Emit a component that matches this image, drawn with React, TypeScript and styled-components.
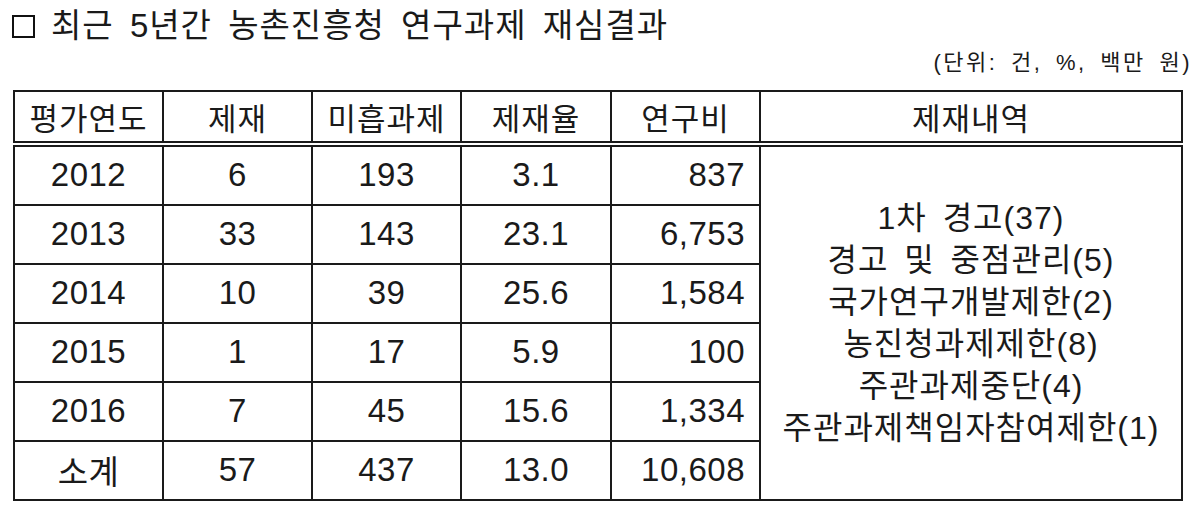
import styled, { createGlobalStyle } from 'styled-components';

const GlobalStyle = createGlobalStyle`
  body {
    margin: 0;
    background: #fff;
    color: #1a1a1a;
    font-family: 'Liberation Sans', 'Noto Sans CJK KR', sans-serif;
  }
`;

const Page = styled.div`
  width: 1200px;
  height: 514px;
  padding: 6px 12px 0 12px;
  box-sizing: border-box;
`;

const Title = styled.h1`
  margin: 0;
  height: 40px;
  display: flex;
  align-items: center;
  gap: 16px;
  font-size: 33px;
  font-weight: 400;
  line-height: 40px;
  letter-spacing: 1px;
  word-spacing: 6px;
`;

const Square = styled.span`
  width: 19px;
  height: 19px;
  border: 2px solid #111;
  flex-shrink: 0;
  margin-top: 1px;
`;

const Unit = styled.div`
  height: 44px;
  text-align: right;
  font-size: 22px;
  line-height: 34px;
  margin-right: -4px;
  letter-spacing: 2.5px;
  word-spacing: 5px;
`;

const Table = styled.table`
  margin-left: 1px;
  width: 1170px;
  border-collapse: collapse;
  table-layout: fixed;
  border: 2px solid #1a1a1a;
  font-size: 33px;
`;

const HeadCell = styled.th`
  height: 49px;
  padding: 0;
  border: 2px solid #1a1a1a;
  border-bottom: 6px double #1a1a1a;
  font-weight: 400;
  font-size: 31px;
  letter-spacing: 1px;
  text-align: center;
`;

const Cell = styled.td<{ $align?: 'center' | 'right' }>`
  height: 55px;
  padding: 0 14px 2px 14px;
  border: 2px solid #1a1a1a;
  text-align: ${({ $align }) => $align || 'center'};
  letter-spacing: 0.5px;
`;

const NoteCell = styled.td`
  padding: 0 4px;
  border: 2px solid #1a1a1a;
  text-align: center;
  vertical-align: middle;
  font-size: 32px;
  line-height: 42px;
  letter-spacing: 1px;
  word-spacing: 6px;
`;

const rows = [
  { year: '2012', count: '6', unfinished: '193', rate: '3.1', cost: '837' },
  { year: '2013', count: '33', unfinished: '143', rate: '23.1', cost: '6,753' },
  { year: '2014', count: '10', unfinished: '39', rate: '25.6', cost: '1,584' },
  { year: '2015', count: '1', unfinished: '17', rate: '5.9', cost: '100' },
  { year: '2016', count: '7', unfinished: '45', rate: '15.6', cost: '1,334' },
  { year: '소계', count: '57', unfinished: '437', rate: '13.0', cost: '10,608' },
];

const notes = [
  '1차 경고(37)',
  '경고 및 중점관리(5)',
  '국가연구개발제한(2)',
  '농진청과제제한(8)',
  '주관과제중단(4)',
  '주관과제책임자참여제한(1)',
];

const App = () => {
  return (
    <Page>
      <GlobalStyle />
      <Title>
        <Square />
        최근 5년간 농촌진흥청 연구과제 재심결과
      </Title>
      <Unit>(단위: 건, %, 백만 원)</Unit>
      <Table>
        <colgroup>
          <col style={{ width: 149 }} />
          <col style={{ width: 149 }} />
          <col style={{ width: 149 }} />
          <col style={{ width: 150 }} />
          <col style={{ width: 149 }} />
          <col />
        </colgroup>
        <thead>
          <tr>
            <HeadCell>평가연도</HeadCell>
            <HeadCell>제재</HeadCell>
            <HeadCell>미흡과제</HeadCell>
            <HeadCell>제재율</HeadCell>
            <HeadCell>연구비</HeadCell>
            <HeadCell>제재내역</HeadCell>
          </tr>
        </thead>
        <tbody>
          {rows.map((row, i) => (
            <tr key={row.year}>
              <Cell>{row.year}</Cell>
              <Cell>{row.count}</Cell>
              <Cell>{row.unfinished}</Cell>
              <Cell>{row.rate}</Cell>
              <Cell $align="right">{row.cost}</Cell>
              {i === 0 && (
                <NoteCell rowSpan={rows.length}>
                  {notes.map((note) => (
                    <div key={note}>{note}</div>
                  ))}
                </NoteCell>
              )}
            </tr>
          ))}
        </tbody>
      </Table>
    </Page>
  );
};

export default App;
